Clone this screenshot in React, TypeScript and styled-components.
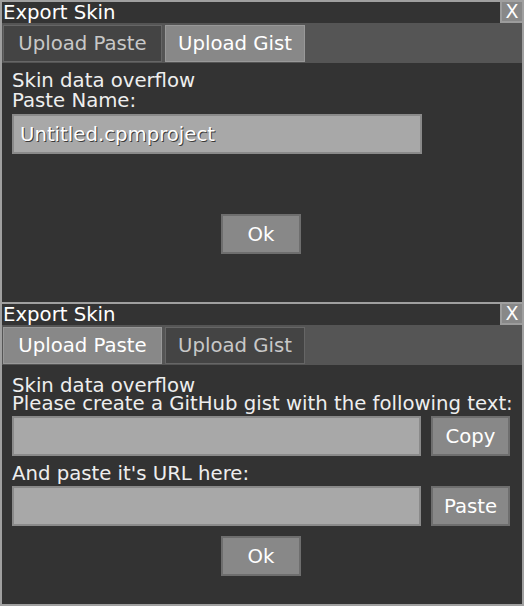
import styled, { createGlobalStyle } from "styled-components";

const GlobalStyle = createGlobalStyle`
  html, body {
    margin: 0;
    padding: 0;
    background: #333333;
  }
  * {
    box-sizing: border-box;
  }
`;

const Page = styled.div`
  width: 524px;
  height: 606px;
  display: flex;
  flex-direction: column;
  font-family: "DejaVu Sans", sans-serif;
  font-size: 19.7px;
  color: #ffffff;
`;

const Window = styled.div`
  height: 302px;
  display: flex;
  flex-direction: column;
  border: 2px solid #a0a0a0;
  border-bottom: none;
  background: #333333;

  &:last-child {
    height: 304px;
    border-bottom: 2px solid #a0a0a0;
  }
`;

const TitleBar = styled.div`
  height: 21px;
  display: flex;
  align-items: center;
  justify-content: space-between;
  padding-left: 1px;
  line-height: 21px;
  background: #333333;
`;

const CloseButton = styled.div`
  width: 22px;
  height: 21px;
  display: flex;
  align-items: center;
  justify-content: center;
  background: #888888;
  border: 2px solid #9c9c9c;
  border-top: none;
  border-right: none;
  font-size: 19px;
  color: #ffffff;
`;

const TabBar = styled.div`
  height: 40px;
  display: flex;
  gap: 3px;
  padding: 2px 0 1px 1px;
  background: #555555;
`;

const Tab = styled.div<{ $active?: boolean; $width: number }>`
  width: ${(p) => p.$width}px;
  display: flex;
  align-items: center;
  justify-content: center;
  background: ${(p) => (p.$active ? "#888888" : "#444444")};
  border: 1px solid ${(p) => (p.$active ? "#999999" : "#666666")};
  color: ${(p) => (p.$active ? "#ffffff" : "#c8c8c8")};
  white-space: nowrap;
`;

const Body = styled.div<{ $pt: number }>`
  flex: 1;
  display: flex;
  flex-direction: column;
  padding: ${(p) => p.$pt}px 12px 0 10px;
`;

const Lines = styled.div<{ $lh: number; $mt?: number }>`
  line-height: ${(p) => p.$lh}px;
  margin-top: ${(p) => p.$mt ?? 0}px;
  color: #eeeeee;
  white-space: nowrap;
`;

const Field = styled.input<{ $width?: number }>`
  width: ${(p) => (p.$width ? `${p.$width}px` : "100%")};
  height: 40px;
  margin: 0;
  padding: 0 0 0 6px;
  border: 2px solid #8a8a8a;
  background: #a8a8a8;
  font-family: inherit;
  font-size: inherit;
  color: #ffffff;
  text-shadow: 1px 1px 0 #3a3a3a;
  outline: none;
`;

const FieldSlot = styled.div<{ $mt: number }>`
  margin-top: ${(p) => p.$mt}px;
`;

const FieldRow = styled.div<{ $mt: number }>`
  display: grid;
  grid-template-columns: 1fr 79px;
  gap: 10px;
  margin-top: ${(p) => p.$mt}px;
`;

const Button = styled.div<{ $width?: number }>`
  width: ${(p) => p.$width ?? 79}px;
  height: 40px;
  display: flex;
  align-items: center;
  justify-content: center;
  background: #888888;
  border: 2px solid #6e6e6e;
  color: #ffffff;
`;

const Footer = styled.div<{ $mt: number }>`
  display: flex;
  justify-content: center;
  margin-top: ${(p) => p.$mt}px;
`;

const Header = ({ gist }: { gist: boolean }) => (
  <>
    <TitleBar>
      <span>Export Skin</span>
      <CloseButton>X</CloseButton>
    </TitleBar>
    <TabBar>
      <Tab $width={159} $active={!gist}>
        Upload Paste
      </Tab>
      <Tab $width={140} $active={gist}>
        Upload Gist
      </Tab>
    </TabBar>
  </>
);

export default function App() {
  return (
    <Page>
      <GlobalStyle />
      <Window>
        <Header gist />
        <Body $pt={8}>
          <Lines $lh={20}>
            Skin data overflow
            <br />
            Paste Name:
          </Lines>
          <FieldSlot $mt={3}>
            <Field $width={410} readOnly value="Untitled.cpmproject" />
          </FieldSlot>
          <Footer $mt={60}>
            <Button $width={80}>Ok</Button>
          </Footer>
        </Body>
      </Window>
      <Window>
        <Header gist={false} />
        <Body $pt={12}>
          <Lines $lh={18}>
            Skin data overflow
            <br />
            Please create a GitHub gist with the following text:
          </Lines>
          <FieldRow $mt={3}>
            <Field readOnly value="" />
            <Button>Copy</Button>
          </FieldRow>
          <Lines $lh={18} $mt={9}>
            And paste it's URL here:
          </Lines>
          <FieldRow $mt={3}>
            <Field readOnly value="" />
            <Button>Paste</Button>
          </FieldRow>
          <Footer $mt={10}>
            <Button $width={80}>Ok</Button>
          </Footer>
        </Body>
      </Window>
    </Page>
  );
}
